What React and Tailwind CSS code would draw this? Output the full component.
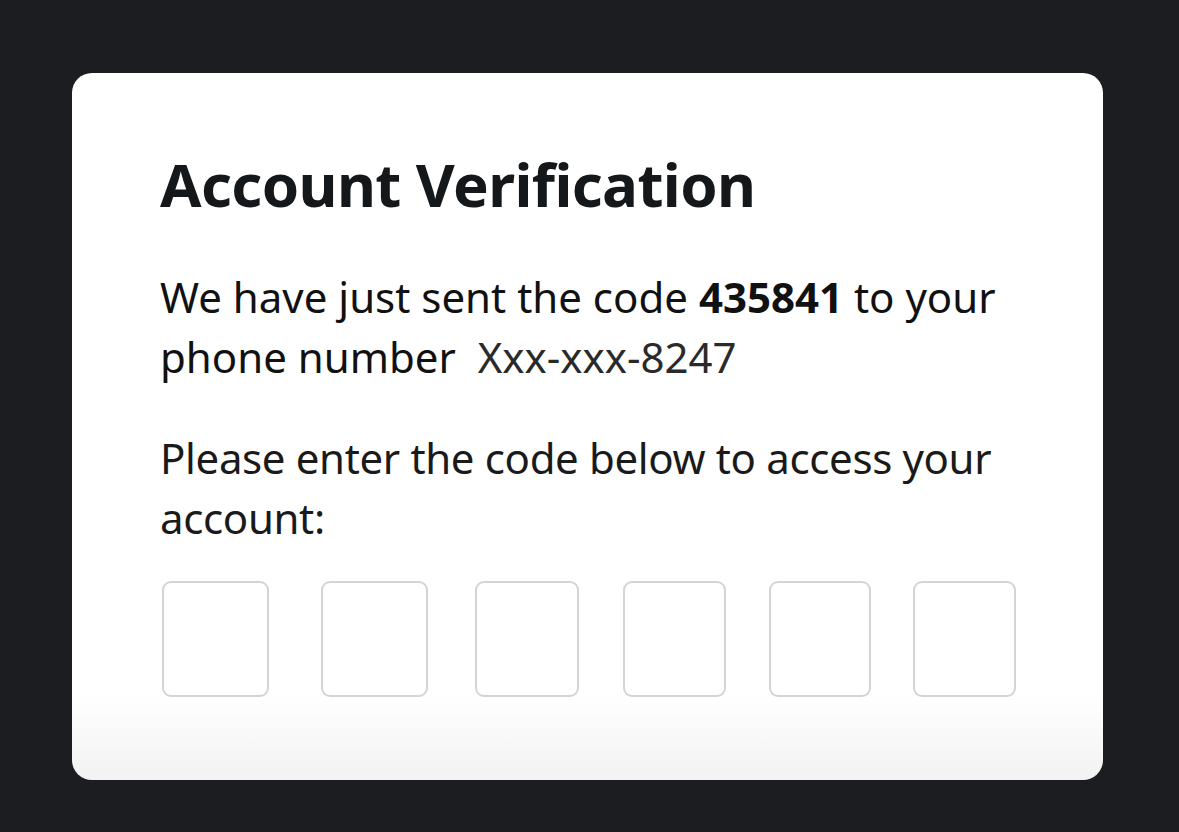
import React from 'react';

// individual widths/offsets of the six code boxes, as in the picture
const boxes = [
  { w: 'w-[107px]', ml: 'ml-0' },
  { w: 'w-[107px]', ml: 'ml-[52px]' },
  { w: 'w-[104px]', ml: 'ml-[47px]' },
  { w: 'w-[103px]', ml: 'ml-[44px]' },
  { w: 'w-[102px]', ml: 'ml-[43px]' },
  { w: 'w-[103px]', ml: 'ml-[42px]' },
];

const App = () => {
  return (
    <div className="w-[1179px] h-[832px] bg-[#1c1d21] pt-[73px] pl-[72px]" style={{ fontFamily: '"Noto Sans", "Open Sans", sans-serif' }}>
      <div className="w-[1031px] h-[707px] rounded-[20px] bg-gradient-to-b from-white from-[88%] to-[#f2f2f3] pl-[88px] pt-[75px]">
        <h1 className="text-[60px] font-bold leading-[72px] text-[#15181b] tracking-[-0.6px] whitespace-nowrap">Account Verification</h1>

        <p className="mt-[47px] text-[42px] leading-[60px] text-[#111] whitespace-nowrap">
          We have just sent the code <span className="font-bold">435841</span> to your
          <br />
          phone number&nbsp; <span className="text-[#2a2a2a]">Xxx-xxx-8247</span>
        </p>

        <p className="mt-[41px] text-[42px] leading-[60px] text-[#1a1a1a] tracking-[-0.35px] whitespace-nowrap">
          Please enter the code below to access your
          <br />
          account:
        </p>

        {/* code input boxes */}
        <div className="mt-[33px] flex pl-[2px]">
          {boxes.map((b, i) => (
            <div key={i} className={`${b.w} ${b.ml} h-[116px] rounded-[9px] border-2 border-[#d4d4d6] bg-white`} />
          ))}
        </div>
      </div>
    </div>
  );
};

export default App;
